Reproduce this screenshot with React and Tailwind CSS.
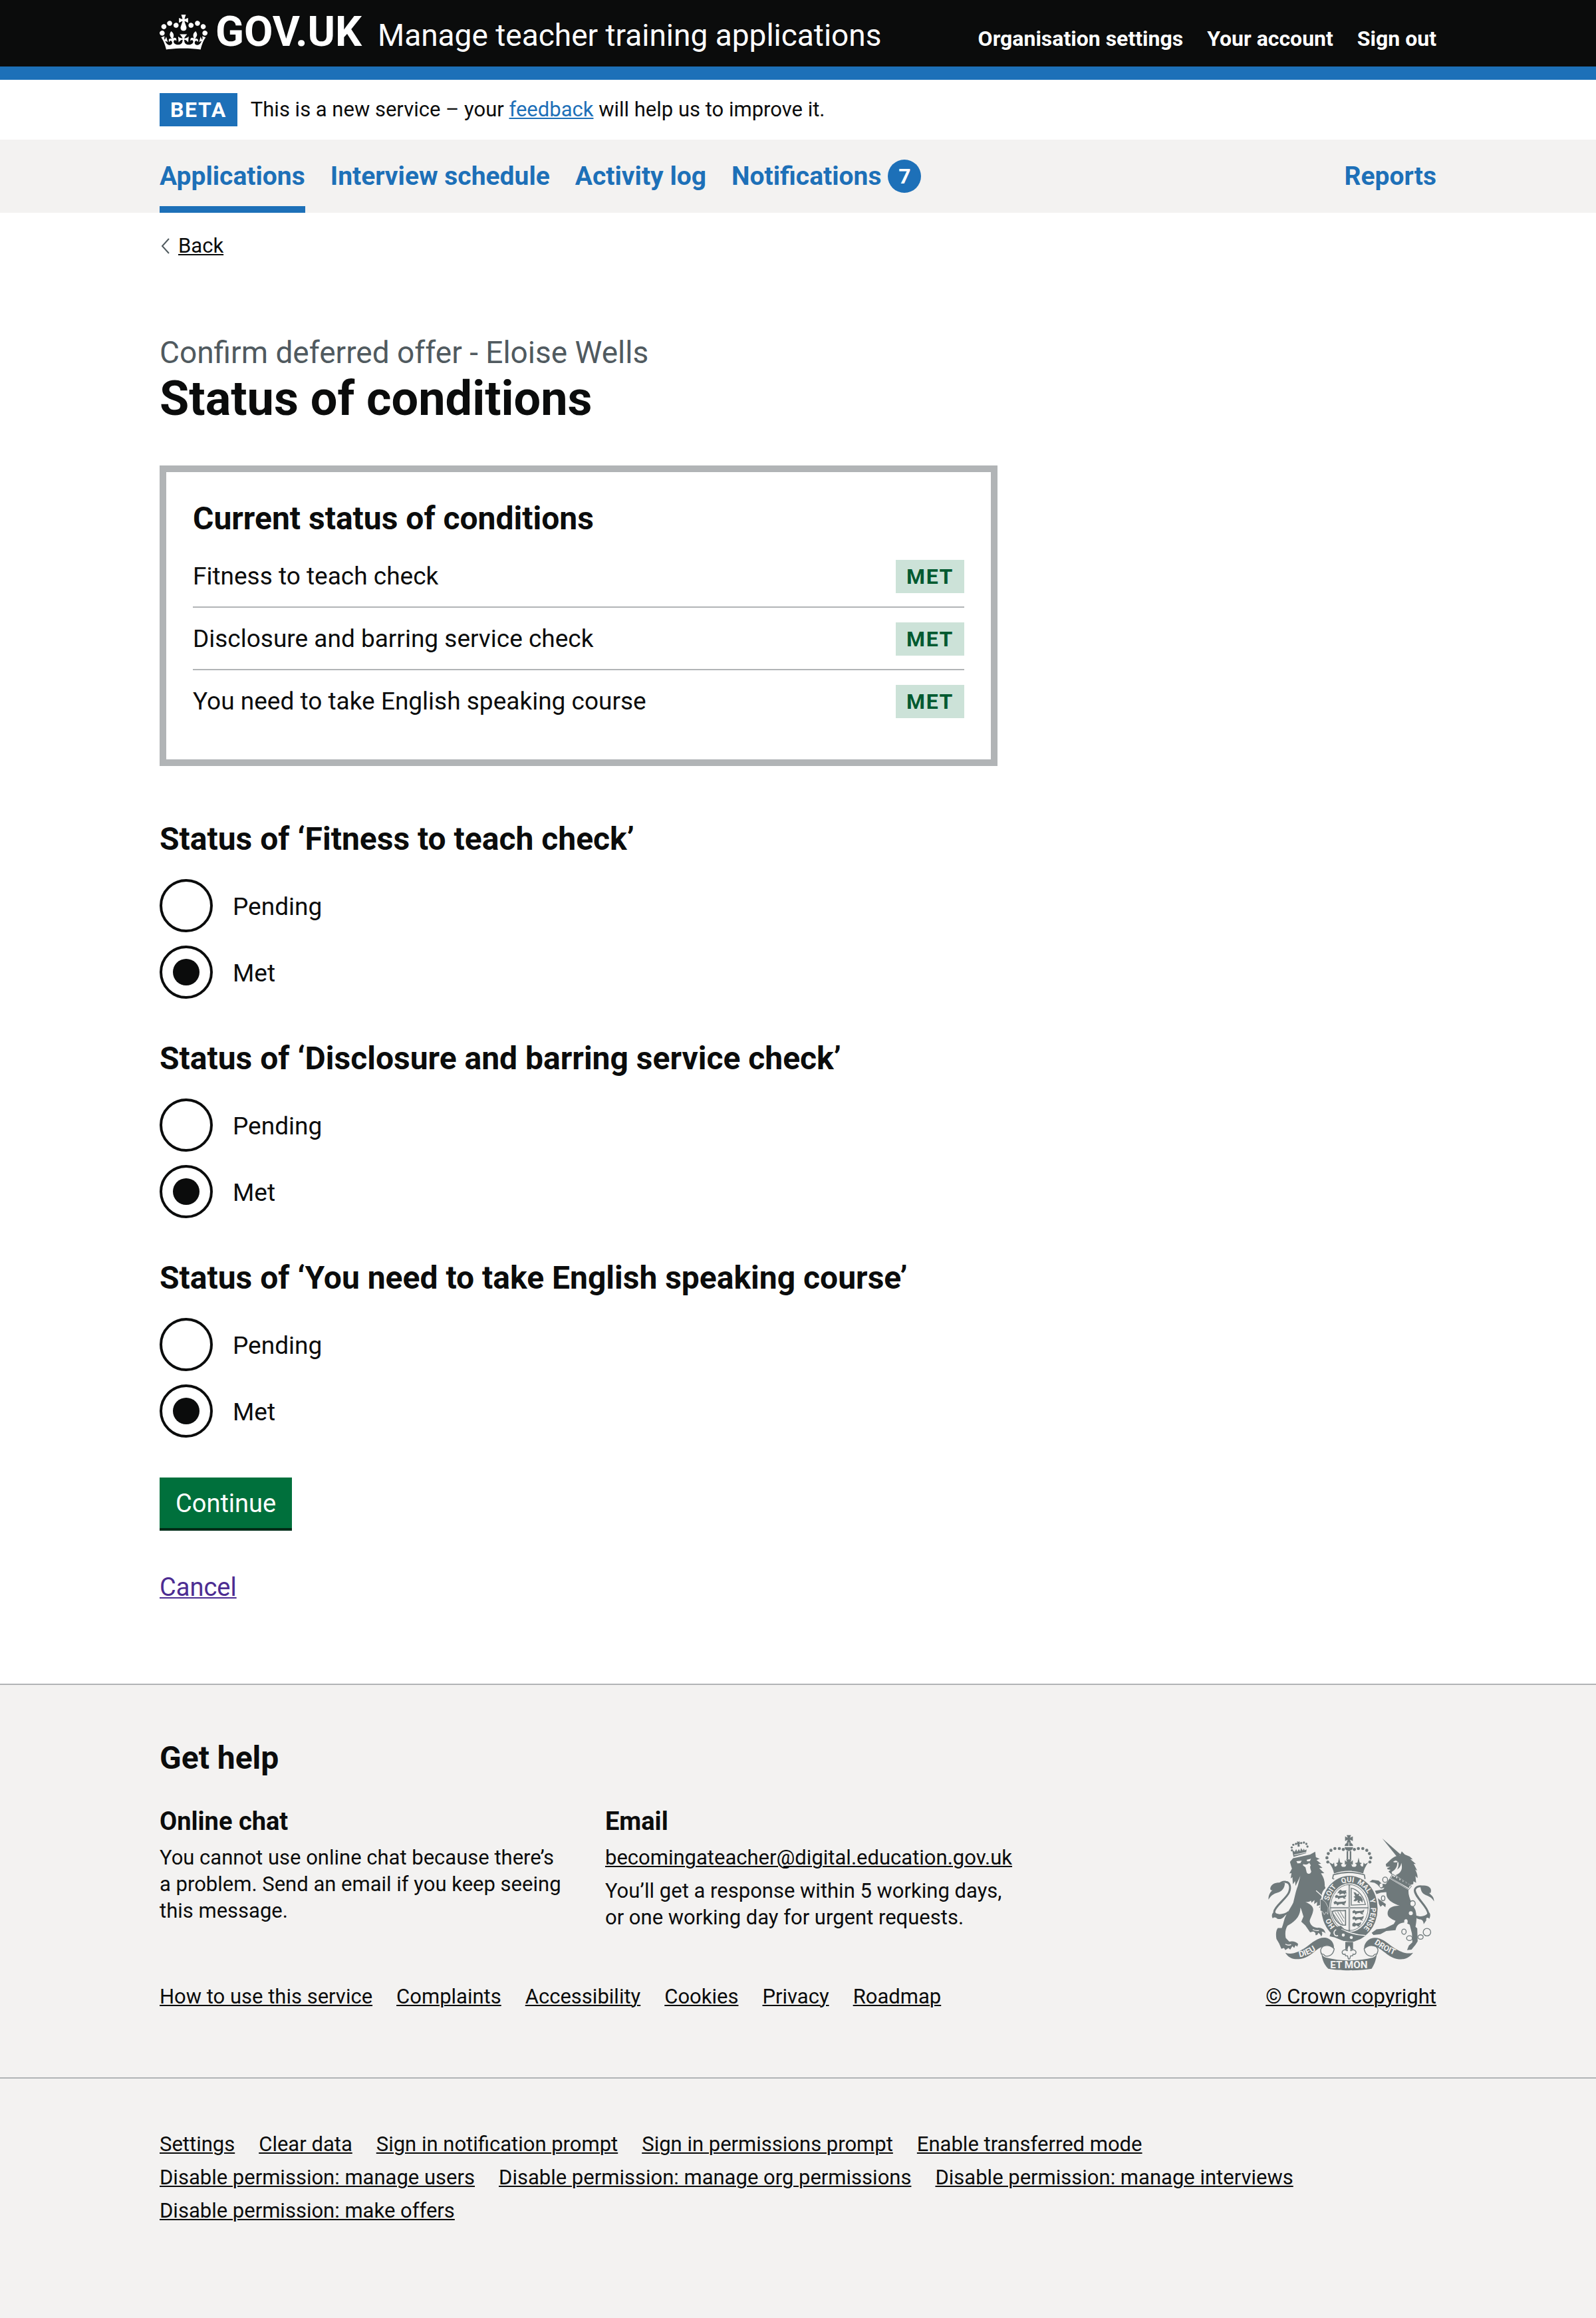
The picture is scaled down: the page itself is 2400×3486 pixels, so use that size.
import React from "react";

const LINK =
  "underline decoration-2 underline-offset-2 text-[#0b0c0c] hover:decoration-4";

const headerLinks = ["Organisation settings", "Your account", "Sign out"];

const navItems = [
  { label: "Applications", current: true },
  { label: "Interview schedule" },
  { label: "Activity log" },
  { label: "Notifications", count: 7 },
];

const conditions = [
  "Fitness to teach check",
  "Disclosure and barring service check",
  "You need to take English speaking course",
];

const supportLinks = [
  "How to use this service",
  "Complaints",
  "Accessibility",
  "Cookies",
  "Privacy",
  "Roadmap",
];

const adminLinks = [
  "Settings",
  "Clear data",
  "Sign in notification prompt",
  "Sign in permissions prompt",
  "Enable transferred mode",
  "Disable permission: manage users",
  "Disable permission: manage org permissions",
  "Disable permission: manage interviews",
  "Disable permission: make offers",
];

function Container({ className = "", children }) {
  return (
    <div className="px-[60px]">
      <div className={"mx-auto max-w-[1920px] " + className}>{children}</div>
    </div>
  );
}

function Crown() {
  return (
    <svg aria-hidden="true" viewBox="0 0 132 97" className="h-[53px] w-[72px] shrink-0 self-center fill-current">
      <path d="M25 30.2c3.5 1.5 7.7-.2 9.1-3.7 1.5-3.6-.2-7.8-3.9-9.2-3.6-1.4-7.6.3-9.1 3.9-1.4 3.5.3 7.5 3.9 9zM9 39.5c3.6 1.5 7.8-.2 9.2-3.7 1.5-3.6-.2-7.8-3.9-9.1-3.6-1.5-7.6.2-9.1 3.8-1.4 3.5.3 7.5 3.8 9zM4.4 57.2c3.5 1.5 7.7-.2 9.1-3.8 1.5-3.6-.2-7.7-3.9-9.1-3.5-1.5-7.6.3-9.1 3.8-1.4 3.5.3 7.6 3.9 9.1zm38.3-21.4c3.5 1.5 7.7-.2 9.1-3.8 1.5-3.6-.2-7.7-3.9-9.1-3.6-1.5-7.6.3-9.1 3.8-1.3 3.6.4 7.7 3.9 9.1zm64.4-5.6c-3.6 1.5-7.8-.2-9.1-3.7-1.5-3.6.2-7.8 3.8-9.2 3.6-1.4 7.7.3 9.2 3.9 1.3 3.5-.4 7.5-3.9 9zm15.9 9.3c-3.6 1.5-7.7-.2-9.1-3.7-1.5-3.6.2-7.8 3.7-9.1 3.6-1.5 7.7.2 9.2 3.8 1.5 3.5-.3 7.5-3.8 9zm4.7 17.7c-3.6 1.5-7.8-.2-9.2-3.8-1.5-3.6.2-7.7 3.9-9.1 3.6-1.5 7.7.3 9.2 3.8 1.3 3.5-.4 7.6-3.9 9.1zM89.3 35.8c-3.6 1.5-7.8-.2-9.2-3.8-1.4-3.6.2-7.7 3.9-9.1 3.6-1.5 7.7.3 9.2 3.8 1.4 3.6-.3 7.7-3.9 9.1zM69.7 17.7l8.9 4.7V9.3l-8.9 2.8c-.2-.3-.5-.6-.9-.9L72.4 0H59.6l3.5 11.2c-.3.3-.6.5-.9.9l-8.8-2.8v13.1l8.8-4.7c.3.3.6.7.9.9l-5 15.4v.1c-.2.8-.4 1.6-.4 2.4 0 4.1 3.1 7.5 7 8.1h.2c.3 0 .7.1 1 .1.4 0 .7 0 1-.1h.2c4-.6 7.1-4.1 7.1-8.1 0-.8-.1-1.7-.4-2.4V34l-5.1-15.4c.4-.2.7-.6 1-.9zM66 92.8c16.9 0 32.8 1.1 47.1 3.2 4-16.9 8.9-26.7 14-33.5l-9.6-3.4c1 4.9 1.1 7.2 0 10.2-1.5-1.4-3-4.3-4.2-8.7L108.6 76c2.8-2 5-3.2 7.5-3.3-4.4 9.4-10 11.9-13.6 11.2-4.3-.8-6.3-4.6-5.6-7.9 1-4.7 5.7-5.9 8-.5 4.3-8.7-3-11.4-7.6-8.8 7.1-7.2 7.9-13.5 2.1-21.1-8 6.1-8.1 12.3-4.5 20.8-4.7-5.4-12.1-2.5-9.5 6.2 3.4-5.2 7.9-2 7.2 3.1-.6 4.3-6.4 7.8-13.5 7.2-10.3-.9-10.9-8-11.2-13.8 2.5-.5 7.1 1.8 11 7.3L80.2 60c-4.1 4.4-8 5.3-12.3 5.4 1.4-4.4 8-11.6 8-11.6H55.5s6.4 7.2 7.9 11.6c-4.2-.1-8-1-12.3-5.4l1.4 16.4c3.9-5.5 8.5-7.7 10.9-7.3-.3 5.8-.9 12.8-11.1 13.8-7.2.6-12.9-2.9-13.5-7.2-.7-5 3.8-8.3 7.1-3.1 2.7-8.7-4.6-11.6-9.4-6.2 3.7-8.5 3.6-14.7-4.6-20.8-5.8 7.6-5 13.9 2.2 21.1-4.7-2.6-11.9.1-7.7 8.8 2.3-5.5 7.1-4.2 8.1.5.7 3.3-1.3 7.1-5.7 7.9-3.5.7-9-1.8-13.5-11.2 2.5.1 4.7 1.3 7.5 3.3l-4.7-15.4c-1.2 4.4-2.7 7.2-4.3 8.7-1.1-3-.9-5.3 0-10.2l-9.5 3.4c5 6.9 9.9 16.7 14 33.5 14.8-2.1 30.8-3.2 47.7-3.2z" />
    </svg>
  );
}

const crownBeads = [
  [462, 125], [480, 121], [500, 121], [518, 129], [530, 144], [536, 163], [532, 182],
  [412, 125], [394, 121], [374, 121], [356, 129], [344, 144], [338, 163], [342, 182],
];

const lionBeads = [
  [180, 129], [179, 116], [186, 104], [198, 100], [222, 96], [234, 94], [245, 100], [250, 112],
];

const garterWords = [
  ["SOIT", "M347 358A96 116 0 0 1 402 281"],
  ["QUI", "M406 280A96 116 0 0 1 480 283"],
  ["MAL", "M473 279A96 116 0 0 1 530 345"],
  ["Y", "M530 350A96 116 0 0 1 536 400"],
  ["PENSE", "M536 388A96 116 0 0 1 478 500"],
  ["HO", "M375 474A92 112 0 0 1 346 400"],
];

/* Royal coat of arms: lion, garter with quartered shield, unicorn and motto ribbon. */
function RoyalArms() {
  const ink = "#6f797b";
  const paper = "#f3f2f1";
  return (
    <svg aria-hidden="true" viewBox="70 58 756 616" className="h-[205px] w-[252px]" fill={ink}>
      {/* lion crown */}
      {lionBeads.map(([x, y]) => (
        <circle key={x + "-" + y} cx={x} cy={y} r="5" />
      ))}
      <path d="M203 88l7 3 5-4-1 7 6 2-6 4 1 12-9 1-1-12-7-1 6-5z" />
      <path d="M182 134l7-3 3 6 7-14 5 12 7-12 6 11 4-15 8 11 5-9 3 8 9-4-2 17-57 17z" />
      <path d="M190 150l56-12" stroke={paper} strokeWidth="3" />

      {/* lion */}
      <path d="M171 181L185 165 200 162 262 148 285 135 288 160 305 168 291 173 312 190 298 191 318 208 303 210 326 232 311 233C324 252 329 270 328 290L332 300C318 312 314 325 314 338L336 352 348 385 346 415 338 402 330 418 320 405 308 402 318 392 302 388 310 376 292 380 294 362 280 372 282 354 268 366 266 356C258 362 250 364 240 362 258 370 278 380 276 400 272 425 262 435 260 450 264 470 280 480 300 479 318 480 328 488 332 505 326 498 320 496 314 497 318 504 318 512 312 518 308 508 304 504 298 502 298 510 292 514 286 512 288 504 284 498 276 496L262 500 240 468 222 452 232 428 222 396 218 388C218 420 205 445 160 470 150 485 148 505 152 525L168 542C182 538 198 542 208 552L204 564 196 558 190 570 182 562 172 578 164 570 150 580 144 570 132 574 122 550 110 530C106 510 108 490 116 480L134 480C142 460 144 440 152 425 166 400 176 385 186 365 194 335 196 318 206 292L218 244 212 258 196 290 194 268 184 282 182 250 174 256 178 232 168 234 180 212 176 200z" />
      <path d="M200 178l24-2-6 11-13 1zM246 172l20-5-5 11-12 1zM230 192c14 4 24-1 29-8 0 8 6 8 6 14-6 4-1 18 2 26 0 12-18 16-21 3l-5-21-11-8z" fill={paper} />
      <path d="M289 311l24 22 12 20M150 553c9 5 18 6 26 2M274 487c10 5 18 6 28 4" fill="none" stroke={paper} strokeWidth="4" />
      <path d="M165 408c-22 18-66 20-65-2 4-26 55-58 67-88 9-24 3-44-14-46-14-2-25 4-33 13" fill="none" stroke={ink} strokeWidth="9" />
      <path d="M74 352c-1-22 8-33 18-43-7 2-10 0-10-8 4-20 22-27 46-26l20 2c-1 22-11 33-26 41-18 5-35 11-48 34zM97 408c-9 9-9 20-4 28 8-6 14-4 20 2 18 6 31-4 42-25-18 8-40 9-58-5z" />

      {/* unicorn */}
      <path d="M588 75l84 74-16 11z" />
      <path d="M668 152l8-18 14 14 22 9 14 13-11-1 25 22-10-1 16 31-9-5c6 12 12 25 10 39l-9-10 3 31-12-7-1 13-18 5-62-46c24-8 34-27 26-55-2 15-10 29-28 34-11 4-13 10-15 19l-15-14 10-8-14-2-2-5 14-6-18-1-2-11c20-18 32-37 62-39z" />
      <path d="M637 181c10-8 16-6 21 0-7 3-12 4-21 0zM661 182c4 24-9 46-27 53l-4-8c17-9 26-22 26-42z" fill={paper} />
      <path d="M624 252L636 240 708 300C700 335 722 365 738 400 746 430 742 455 738 475L746 482 748 540 738 556 720 578 700 580 708 560 724 545 722 505 712 465 690 455C668 458 654 462 648 490L606 494 580 508 548 512 540 502 562 486 600 482 640 462 648 448C630 440 612 432 612 415 612 390 635 378 668 380 640 370 615 358 608 335L606 318 582 320 560 328 566 344 582 356 604 372 602 386 590 376 580 384 560 350 543 325 555 312 592 306 598 298 582 302 566 284 553 276 530 272 543 262 572 266 586 280 604 282z" />
      <path d="M634 233l90 58-15 19-88-54z" fill={paper} />
      <path d="M634 236l86 55-12 15-84-52z" fill="none" stroke={ink} strokeWidth="3" />
      <path d="M628 254l8-13 5 9 8-5 3 12 9-8 6 16 9-9 5 16 9-8 5 15 9-6 3 12 8-3-7 18z" />
      <path d="M744 433c23 3 50 3 52-18-2-32-62-75-61-106 3-17 24-22 43-13" fill="none" stroke={ink} strokeWidth="9" />
      <path d="M760 290c31-7 52 8 48 25 0 10-9 8-10 3 5 14 24 14 24 42-14-24-31-23-44-32-13-9-16-20-18-38zM798 408c9 8 8 18 3 30-11-7-16-6-14 8l-12 17c0-13-6-21-16-22-9-1-17-5-22-19 24 9 45 8 61-14z" />
      <g fill={paper}>
        <ellipse cx="583" cy="288" rx="7" ry="9" />
        <ellipse cx="592" cy="346" rx="8" ry="11" stroke={ink} strokeWidth="4" />
        <ellipse cx="601" cy="262" rx="11" ry="12" stroke={ink} strokeWidth="4" />
        <ellipse cx="725" cy="370" rx="12" ry="13" stroke={ink} strokeWidth="4" />
        <ellipse cx="717" cy="413" rx="9" ry="9" />
        <ellipse cx="695" cy="451" rx="8" ry="11" />
        <ellipse cx="686" cy="497" rx="10" ry="12" stroke={ink} strokeWidth="4" />
        <ellipse cx="711" cy="526" rx="13" ry="11" stroke={ink} strokeWidth="4" />
        <ellipse cx="761" cy="521" rx="12" ry="10" stroke={ink} strokeWidth="4" />
        <circle cx="790" cy="499" r="17" stroke={ink} strokeWidth="4" />
      </g>

      {/* royal crown */}
      <path d="M427 60h20l-5 12 13-6v21l-13-6 5 13h-20l5-13-12 6V66l12 6z" />
      <path d="M418 110a19 17 0 0 1 38 0zM418 115h38a19 17 0 0 1-38 0z" />
      <path d="M437 93v20" stroke={paper} strokeWidth="3" />
      {crownBeads.map(([x, y]) => (
        <circle key={x + "-" + y} cx={x} cy={y} r="7" />
      ))}
      <path d="M427 132h7v38h-7zM441 132h7v38h-7z" />
      <path d="M350 184l14 8 6-8 3 18c6 2 12-2 12-10l-7-5 10-3 5-22 5 22 12 3-8 6c0 9 8 14 20 9l4-10-7 2 0-20 10 8-4-12h24l-4 12 10-8v20l-7-2 4 10c12 5 20 0 20-9l-8-6 12-3 5-22 5 22 10 3-7 5c0 8 6 12 12 10l3-18 6 8 14-8c-12 18-18 30-22 50-42-16-88-16-132 0-4-20-10-32-22-50z" />
      <path d="M367 240c44-14 96-14 140 0l3 16-10 6c-40-22-86-22-126 0l-10-6z" fill={paper} stroke={ink} strokeWidth="5" />

      {/* garter */}
      <ellipse cx="440" cy="392" rx="134" ry="155" fill={paper} />
      <ellipse cx="440" cy="392" rx="127" ry="148" />
      <ellipse cx="440" cy="388" rx="91" ry="110" fill={paper} />
      <path d="M308 350l10 2 14 12 12 24-2 30-8-10-8 12-8-14-10-4z" stroke={paper} strokeWidth="2" />
      <g fill={paper} fontFamily="Roboto, sans-serif" fontWeight="700" fontSize="33">
        {garterWords.map(([word, d]) => (
          <React.Fragment key={word}>
            <path id={"garter-" + word} d={d} fill="none" />
            <text><textPath href={"#garter-" + word}>{word}</textPath></text>
          </React.Fragment>
        ))}
      </g>
      <path d="M362 482l38-12 16 14 48 20 50 10-24 16-30 12-48-4-40-16-22-4z" />
      <path d="M404 484c32 18 66 28 108 30M380 488a12 14 0 1 0 8 26" fill="none" stroke={paper} strokeWidth="5" />
      <circle cx="412" cy="512" r="7" fill={paper} />
      <circle cx="448" cy="523" r="7" fill={paper} />

      {/* quartered shield */}
      <ellipse cx="439" cy="388" rx="85" ry="104" fill="none" stroke={ink} strokeWidth="3" />
      <path d="M439 285v206M353 389h172" stroke={ink} strokeWidth="7" />
      <path d="M439 288v200M356 389h166" stroke={paper} strokeWidth="2" />
      <path d="M392 312l8-5 6 5 20-2-2 8 5 5-8 1-4 6-5-6-10 2-6 5-3-9-8 2zM374 336l8-6 8 5 28-2 8-5-2 12-6 3 6 6-10-2-5-4-12 2-7 6-4-8-9 2zM368 364l9-6 8 5 30-2 10-5-3 12-6 3 6 7-11-2-6-5-12 2-8 6-4-8-10 2z" />
      <path d="M453 405l8-6 8 5 28-2 10-5-3 12-6 3 6 7-11-2-6-5-12 2-8 6-4-8-8 2zM453 433l8-6 8 5 26-2 10-5-3 12-6 3 6 7-11-2-6-5-10 2-8 6-4-8-8 2zM453 461l8-6 8 5 14-2 10-5-3 12-6 3 4 7-11-2-6-5-8 6-10-2z" />
      <path d="M448 300c30 6 54 34 64 74l-64 3z" fill="none" stroke={ink} strokeWidth="4" />
      <path d="M458 318l10 2 6 8 10-4-2 10 10 4 8 14-2 14-8-10-6 4 4 8-12-4 2-10-12 6-8-2 8-12-8-8 8-2z" />
      <path d="M362 405c18-8 40 0 60-4v66c-26 4-52-22-60-62z" fill="none" stroke={ink} strokeWidth="5" />
      <path d="M374 408l36 56M386 406l28 46M398 405l18 32M368 418l30 44" stroke={ink} strokeWidth="3" />

      {/* fleur-de-lis pendant */}
      <path d="M421 543h35v34h-35z" />
      <path d="M438 556c8 9 11 18 7 28 9-9 20-6 24 3 2 10-6 15-13 11l-2 8-9 0-4 14h-6l-4-14-9 0-2-8c-7 4-15-1-13-11 4-9 15-12 24-3-4-10-1-19 7-28z" fill={paper} stroke={ink} strokeWidth="4" />

      {/* motto ribbon */}
      <path d="M150 592c30 10 60-2 95-26 30-24 66-54 100-38 22 10 27 34 24 46-12-16-33-18-50-10-42 14-58 62-130 56-18-4-30-14-39-28z" />
      <path d="M727 592c-28 8-56-2-92-26-30-24-62-52-100-38-22 10-32 34-28 46 12-16 33-18 50-10 42 14 62 62 126 57 20-4 34-15 44-29z" />
      <path d="M319 564c-12 10-12 20-6 34 14-2 14 6 16 8 20 6 38-6 42-32-16-16-34-18-52-10zM560 564c12 10 10 20 4 34-14-2-14 6-16 8-20 6-38-6-42-32 16-16 36-18 54-10z" fill={paper} stroke={ink} strokeWidth="4" />
      <path d="M312 584c4 22 10 26 22 30 66 17 140 17 212 0 12-6 16-12 18-30 0 30-10 60-24 80-60 10-148 10-196 0-22-20-30-50-32-80z" />
      <path id="ribbon-left" d="M214 612q50-8 104-54" fill="none" />
      <path id="ribbon-right" d="M551 551q60 42 130 66" fill="none" />
      <g fill={paper} fontFamily="Roboto, sans-serif" fontWeight="700">
        <text fontSize="38"><textPath href="#ribbon-left">DIEU</textPath></text>
        <text fontSize="36"><textPath href="#ribbon-right">DROIT</textPath></text>
        <text x="437" y="661" fontSize="46" textAnchor="middle">ET MON</text>
      </g>
    </svg>
  );
}

function Tag({ className = "", children }) {
  return (
    <strong className={"block px-4 text-[32px] leading-[50px] font-bold tracking-wider uppercase " + className}>
      {children}
    </strong>
  );
}

function ConditionFieldset({ name, index }) {
  return (
    <fieldset className="mb-[60px]">
      <legend className="mb-[30px] text-[48px] leading-[60px] font-bold">Status of ‘{name}’</legend>
      <div className="flex flex-col gap-5">
        {["Pending", "Met"].map((option) => {
          const id = "condition-" + index + "-" + option.toLowerCase();
          return (
            <div key={option} className="flex items-center">
              <input
                type="radio"
                id={id}
                name={"condition-" + index}
                value={option}
                defaultChecked={option === "Met"}
                className="size-20 shrink-0 appearance-none rounded-full border-4 border-[#0b0c0c] bg-clip-content p-4 checked:bg-[#0b0c0c]"
              />
              <label htmlFor={id} className="pt-[3px] pl-[30px] text-[37px] leading-[50px]">
                {option}
              </label>
            </div>
          );
        })}
      </div>
    </fieldset>
  );
}

export default function App() {
  return (
    <div className="bg-[#f3f2f1] font-['Roboto','Liberation_Sans',sans-serif] text-[#0b0c0c] antialiased">
      <header className="border-b-[20px] border-[#1d70b8] bg-[#0b0c0c] text-white">
        <Container className="flex min-h-[100px] items-baseline pt-[18px]">
          <a href="#" className="flex items-baseline gap-3">
            <Crown />
            <span className="text-[63px] leading-[60px] font-bold">GOV.UK</span>
          </a>
          <a href="#" className="ml-6 text-[46px] leading-[60px]">Manage teacher training applications</a>
          <nav aria-label="Account" className="ml-auto">
            <ul className="flex gap-9 text-[32px] leading-[40px] font-bold">
              {headerLinks.map((label) => (
                <li key={label}><a href="#">{label}</a></li>
              ))}
            </ul>
          </nav>
        </Container>
      </header>

      <div className="bg-white">
        <Container className="flex items-center gap-5 py-5">
          <Tag className="bg-[#1d70b8] text-white">Beta</Tag>
          <p className="text-[31px] leading-[40px]">
            This is a new service – your{" "}
            <a href="#" className="text-[#1d70b8] underline decoration-2 underline-offset-2">feedback</a>{" "}
            will help us to improve it.
          </p>
        </Container>
      </div>

      <nav aria-label="Primary" className="bg-[#f3f2f1]">
        <Container className="flex justify-between text-[39px] leading-[50px] font-bold text-[#1d70b8]">
          <ul className="flex gap-[38px]">
            {navItems.map(({ label, current, count }) => (
              <li key={label}>
                <a
                  href="#"
                  aria-current={current ? "page" : undefined}
                  className={
                    "flex items-center gap-[10px] border-b-[10px] pt-[30px] pb-5 " +
                    (current ? "border-[#1d70b8]" : "border-transparent")
                  }
                >
                  {label}
                  {count && (
                    <span className="size-[50px] rounded-full bg-[#1d70b8] text-center text-[32px] text-white">{count}</span>
                  )}
                </a>
              </li>
            ))}
          </ul>
          <a href="#" className="pt-[30px]">Reports</a>
        </Container>
      </nav>

      <div className="bg-white">
        <Container className="pt-[30px] pb-[120px]">
          <a href="#" className="flex w-fit items-center gap-3 text-[31px] leading-[40px]">
            <svg aria-hidden="true" viewBox="0 0 16 24" className="h-6 w-4 fill-none stroke-[#505a5f]" strokeWidth="2">
              <path d="M14 1L4 12l10 11" />
            </svg>
            <span className={LINK}>Back</span>
          </a>

          <main className="max-w-[1260px] pt-[110px]">
            <h1 className="mb-[60px] text-[72px] leading-[80px] font-bold">
              <span className="block text-[46px] leading-[60px] font-normal text-[#505a5f]">
                Confirm deferred offer - Eloise Wells
              </span>
              Status of conditions
            </h1>

            <section className="mb-20 border-[10px] border-[#b1b4b6] p-10">
              <h2 className="mb-[10px] text-[48px] leading-[60px] font-bold">Current status of conditions</h2>
              <ul>
                {conditions.map((name) => (
                  <li
                    key={name}
                    className="flex items-end justify-between border-b-2 border-[#b1b4b6] py-5 last:border-transparent"
                  >
                    <span className="text-[37px] leading-[50px]">{name}</span>
                    <Tag className="mt-0.5 bg-[#cce2d8] text-[#005a30]">Met</Tag>
                  </li>
                ))}
              </ul>
            </section>

            <form onSubmit={(event) => event.preventDefault()}>
              {conditions.map((name, index) => (
                <ConditionFieldset key={name} name={name} index={index} />
              ))}
              <button
                type="submit"
                className="block bg-[#00703c] px-6 pt-0.5 text-[38px] leading-[74px] text-white shadow-[0_4px_0_#002d18]"
              >
                Continue
              </button>
            </form>

            <p className="mt-16 text-[38px] leading-[50px]">
              <a href="#" className="text-[#4c2c92] underline decoration-2 underline-offset-2">Cancel</a>
            </p>
          </main>
        </Container>
      </div>

      <footer className="text-[31px] leading-[40px]">
        <div className="border-t-2 border-[#b1b4b6]">
          <Container className="flex items-end justify-between pt-20 pb-24">
            <div className="w-2/3">
              <h2 className="mb-10 text-[48px] leading-[60px] font-bold">Get help</h2>
              <div className="mb-[74px] grid grid-cols-2 gap-[60px]">
                <section>
                  <h3 className="mb-[10px] text-[38px] leading-[50px] font-bold">Online chat</h3>
                  <p>You cannot use online chat because there’s a problem. Send an email if you keep seeing this message.</p>
                </section>
                <section>
                  <h3 className="mb-[10px] text-[38px] leading-[50px] font-bold">Email</h3>
                  <p className="mb-[10px]">
                    <a href="#" className={LINK}>becomingateacher@digital.education.gov.uk</a>
                  </p>
                  <p>You’ll get a response within 5 working days, or one working day for urgent requests.</p>
                </section>
              </div>
              <ul className="flex flex-wrap gap-x-9 leading-[50px]">
                {supportLinks.map((label) => (
                  <li key={label}><a href="#" className={LINK}>{label}</a></li>
                ))}
              </ul>
            </div>
            <a href="#" className="flex flex-col items-center gap-3.5 leading-[50px]">
              <RoyalArms />
              <span className={LINK}>© Crown copyright</span>
            </a>
          </Container>
        </div>
        <div className="border-t-2 border-[#b1b4b6]">
          <Container className="pt-[74px] pb-[136px]">
            <ul className="flex flex-wrap gap-x-9 leading-[50px]">
              {adminLinks.map((label) => (
                <li key={label}><a href="#" className={LINK}>{label}</a></li>
              ))}
            </ul>
          </Container>
        </div>
      </footer>
    </div>
  );
}
